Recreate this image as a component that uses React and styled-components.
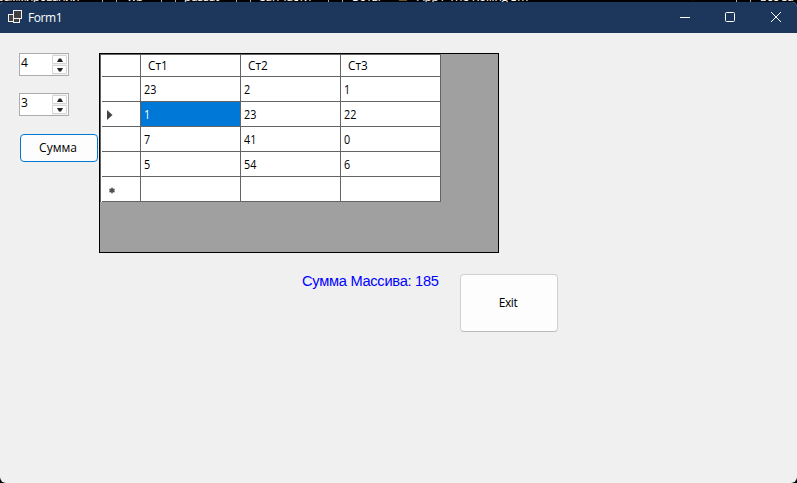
import React from "react";
import styled, { createGlobalStyle } from "styled-components";

const GlobalStyle = createGlobalStyle`
  * { box-sizing: border-box; }
  body { margin: 0; background: #000; }
`;

const Screen = styled.div`
  width: 797px;
  height: 483px;
  overflow: hidden;
  background: #02060f;
  font-family: "Open Sans", "Noto Sans", sans-serif;
  font-size: 12px;
  color: #000;
`;

const BookmarkStrip = styled.div`
  display: grid;
  grid-template-columns: 102px 14px 11px 34px 14px 9px 52px 14px 10px 68px 14px 10px 47px 18px 274px 45px 14px 10px 37px;
  height: 2px;
  overflow: hidden;
  background: #000;
`;

const Bookmark = styled.span`
  height: 16px;
  margin-top: -11px;
  margin-left: ${(p) => (p.$clipped ? -3 : 0)}px;
  line-height: 16px;
  font-size: 12px;
  white-space: nowrap;
  letter-spacing: ${(p) => (p.$clipped ? -0.7 : -0.2)}px;
  color: #fff;
`;

const Folder = styled.span`
  height: 2px;
  width: 1px;
  background: #a8a8a8;
`;

const Favicon = styled.span`
  width: 8px;
  height: 1px;
  background: #6b5526;
`;

const Window = styled.main`
  height: 481px;
  border-radius: 3px 5px 6px 6px;
  overflow: hidden;
  background: #f0f0f0;
`;

const TitleBar = styled.header`
  display: flex;
  align-items: center;
  height: 31px;
  padding-left: 8px;
  background: #1c375b;
  color: #fff;
`;

const Title = styled.h1`
  flex: 1;
  margin: 0 0 0 6px;
  font-size: 12px;
  font-weight: 400;
  line-height: 16px;
  letter-spacing: -0.4px;
`;

const WindowControl = styled.button`
  display: flex;
  align-items: center;
  justify-content: center;
  width: ${(p) => p.$width}px;
  height: 31px;
  padding: 0 0 1px;
  border: 0;
  background: transparent;
`;

const Form = styled.div`
  display: grid;
  grid-template-columns: 80px 1fr;
  padding: 20px 0 0 19px;
`;

const Controls = styled.div`
  display: flex;
  flex-direction: column;
`;

const Spinner = styled.div`
  display: flex;
  width: 50px;
  height: 23px;
  margin-bottom: 17px;
  padding: 0 1px 0 1px;
  border: 1px solid #abadb3;
  background: #fff;
`;

const SpinnerValue = styled.span`
  flex: 1;
  line-height: 18px;
  letter-spacing: -0.5px;
`;

const Steps = styled.div`
  display: flex;
  flex-direction: column;
  gap: 1px;
  width: 15px;
  padding: 1px 0;
  background: #f0f0f0;
`;

const Step = styled.button`
  display: flex;
  align-items: center;
  justify-content: center;
  height: 9px;
  padding: 0;
  border: 1px solid #d6d6d6;
  border-radius: 1px;
  background: #fdfdfd;
`;

const Button = styled.button`
  width: ${(p) => p.$w}px;
  height: ${(p) => p.$h}px;
  padding: 0 2px 2px 0;
  border: 1px solid ${(p) => (p.$focused ? "#0078d4" : "#d0d0d0")};
  border-bottom-color: ${(p) => (p.$focused ? "#0078d4" : "#bababa")};
  border-radius: 4px;
  background: #fdfdfd;
  font: 12px "Open Sans", "Noto Sans", sans-serif;
  letter-spacing: ${(p) => p.$tracking}px;
  color: #000;
`;

const SumButton = styled(Button)`
  margin: 1px 0 0 1px;
`;

const GridView = styled.div`
  width: 400px;
  height: 200px;
  border: 1px solid #000;
  background: #a0a0a0;
`;

const Table = styled.div`
  display: grid;
  grid-template-columns: 40px 100px 100px 100px;
  grid-template-rows: 22px repeat(5, 25px);
  width: 341px;
  border-top: 1px solid #646464;
  border-left: 1px solid #646464;
`;

const Cell = styled.div`
  display: flex;
  align-items: center;
  padding: ${(p) => (p.$header ? 0 : 2)}px 0 0 ${(p) => (p.$header ? 7 : 3)}px;
  border-right: 1px solid #646464;
  border-bottom: 1px solid #646464;
  background: ${(p) => (p.$selected ? "#0078d7" : "#fff")};
  color: ${(p) => (p.$selected ? "#fff" : "#000")};
`;

const RowHeader = styled(Cell)`
  margin-left: 1px;
  padding: 2px 0 0 5px;
  box-shadow: -1px 0 #fff;
`;

const CellText = styled.span`
  line-height: 16px;
  transform: scaleX(${(p) => (p.$header ? 0.98 : 0.9)});
  transform-origin: left;
`;

const Footer = styled.div`
  display: flex;
  align-items: flex-start;
  margin: 21px 0 0 203px;
`;

const SumLabel = styled.span`
  width: 158px;
  font: 14.67px/16px "Liberation Sans", Arial, sans-serif;
  letter-spacing: -0.29px;
  white-space: nowrap;
  color: #0000ff;
  margin-top: -1px;
`;

const IconBox = styled.span`
  display: flex;
  padding-bottom: 2px;
`;

const FormIcon = () => (
  <IconBox>
    <svg width="14" height="13" viewBox="0 0 14 13" fill="#404040" stroke="#f2f2f2">
      <rect x="5.5" y="8.5" width="6" height="4" />
      <rect x="0.5" y="4.5" width="5" height="7" />
      <rect x="5.5" y="0.5" width="8" height="8" />
    </svg>
  </IconBox>
);

const Arrow = ({ down }) => (
  <svg width="6" height="4" viewBox="0 0 6 4">
    <path d={down ? "M0 0h6L4 3.5H2z" : "M0 4h6L4 .5H2z"} fill="#222" />
  </svg>
);

const CurrentRow = () => (
  <svg width="6" height="10" viewBox="0 0 6 10">
    <path d="M0 0l5.5 5L0 10z" fill="#444" />
  </svg>
);

const NewRow = () => (
  <svg width="10" height="7" viewBox="0 0 10 7">
    <path d="M5 .5v6M2.2 2l5.6 3M2.2 5l5.6-3" stroke="#666" strokeWidth="1.2" />
    <circle cx="5" cy="3.5" r="2.3" fill="#505050" />
  </svg>
);

const NumericUpDown = ({ value }) => (
  <Spinner>
    <SpinnerValue>{value}</SpinnerValue>
    <Steps>
      <Step aria-label="Up"><Arrow /></Step>
      <Step aria-label="Down"><Arrow down /></Step>
    </Steps>
  </Spinner>
);

const bookmarks = ["раммировании", "wb", "passat", "запчасти", "Боты"];
const headings = ["Ст1", "Ст2", "Ст3"];
const rows = [
  ["23", "2", "1"],
  ["1", "23", "22"],
  ["7", "41", "0"],
  ["5", "54", "6"],
  ["", "", ""],
];

export default function App() {
  return (
    <Screen>
      <GlobalStyle />
      <BookmarkStrip>
        {bookmarks.map((name, i) => (
          <React.Fragment key={name}>
            {i > 0 && <><Folder /><Folder /></>}
            <Bookmark $clipped={i === 0}>{name}</Bookmark>
          </React.Fragment>
        ))}
        <Favicon />
        <Bookmark>App / The Rolling Sm</Bookmark>
        <Bookmark>»</Bookmark>
        <Folder />
        <Folder />
        <Bookmark>все за</Bookmark>
      </BookmarkStrip>
      <Window>
        <TitleBar>
          <FormIcon />
          <Title>Form1</Title>
          <WindowControl $width={42} aria-label="Minimize">
            <svg width="10" height="11"><path d="M0 5.5h10" stroke="#fff" /></svg>
          </WindowControl>
          <WindowControl $width={48} aria-label="Maximize">
            <svg width="10" height="10"><rect x=".5" y=".5" width="9" height="9" rx="1" fill="none" stroke="#fff" /></svg>
          </WindowControl>
          <WindowControl $width={43} aria-label="Close">
            <svg width="10" height="10"><path d="M0 0l10 10M10 0L0 10" stroke="#fff" /></svg>
          </WindowControl>
        </TitleBar>
        <Form>
          <Controls>
            <NumericUpDown value="4" />
            <NumericUpDown value="3" />
            <SumButton $w={78} $h={28} $focused $tracking={0}>Сумма</SumButton>
          </Controls>
          <div>
            <GridView>
              <Table>
                <RowHeader />
                {headings.map((h) => (
                  <Cell key={h} $header><CellText $header>{h}</CellText></Cell>
                ))}
                {rows.map((row, r) => (
                  <React.Fragment key={r}>
                    <RowHeader>
                      {r === 1 && <CurrentRow />}
                      {r === 4 && <NewRow />}
                    </RowHeader>
                    {row.map((v, c) => (
                      <Cell key={c} $selected={r === 1 && c === 0}>
                        <CellText>{v}</CellText>
                      </Cell>
                    ))}
                  </React.Fragment>
                ))}
              </Table>
            </GridView>
            <Footer>
              <SumLabel>Сумма Массива: 185</SumLabel>
              <Button $w={98} $h={58} $tracking={-0.4}>Exit</Button>
            </Footer>
          </div>
        </Form>
      </Window>
    </Screen>
  );
}
